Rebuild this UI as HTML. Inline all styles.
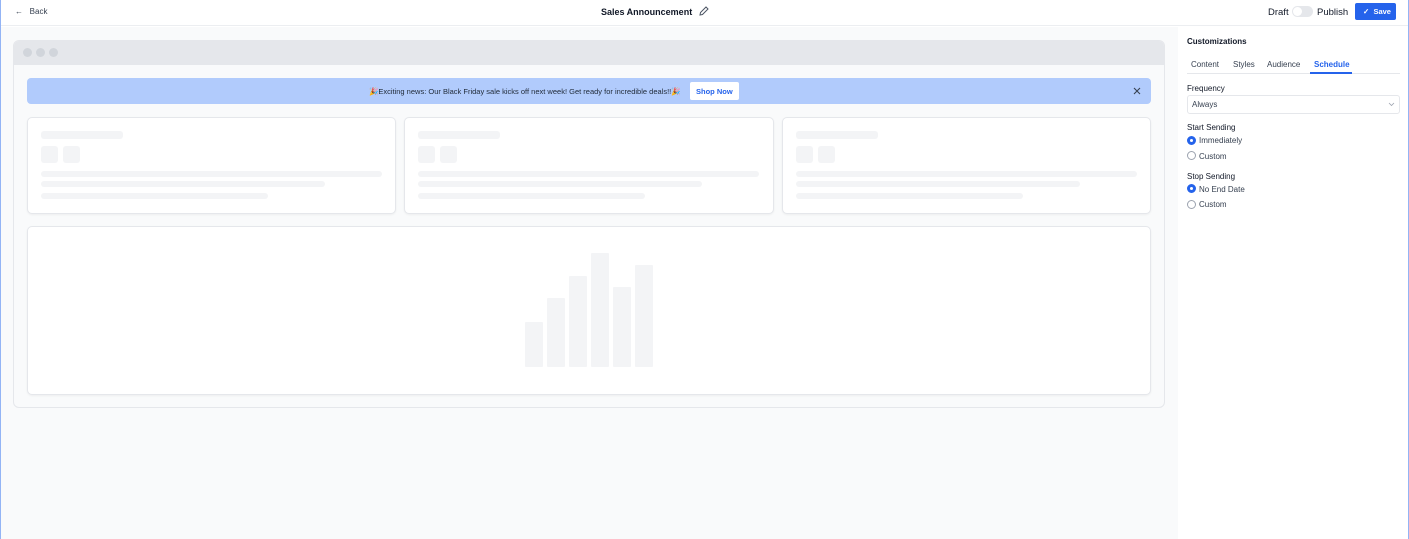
<!DOCTYPE html>
<html><head><style>
*{margin:0;padding:0;box-sizing:border-box}
body{width:1409px;height:539px;overflow:hidden;font-family:"Liberation Sans",sans-serif;background:#fff;position:relative;color:#111827}
.a{position:absolute}
.sk{position:absolute;background:#f3f4f6;border-radius:3px}
.card{position:absolute;background:#fff;border:1px solid #e5e7eb;border-radius:5px;box-shadow:0 1px 2px rgba(0,0,0,.05)}
.radio{position:absolute;width:9px;height:9px;border-radius:50%;border:1px solid #9ca3af;background:#fff}
.radio.on{border:3px solid #2563eb}
.t{position:absolute;font-size:8px;white-space:nowrap}
</style></head><body>
<div class="a" style="left:0;top:0;width:1px;height:539px;background:#93b4f5"></div>
<div class="a" style="right:0;top:0;width:1px;height:539px;background:#93b4f5"></div>
<div class="a" style="left:1px;top:0;width:1407px;height:26px;border-bottom:1px solid #eceef1;background:#fff"></div>
<div class="t" style="left:15px;top:7px;font-size:8px;color:#374151">←&nbsp;&nbsp;&nbsp;Back</div>
<div class="t" style="left:601px;top:7px;font-size:9px;font-weight:bold;color:#111827">Sales Announcement</div>
<svg class="a" style="left:698px;top:5px" width="12" height="12" viewBox="0 0 12 12"><path d="M2 10l.5-2.5L8 2l2 2-5.5 5.5z" fill="none" stroke="#4b5563" stroke-width="1"/></svg>
<div class="t" style="left:1268px;top:7px;font-size:9.5px;color:#111827">Draft</div>
<div class="a" style="left:1292px;top:6px;width:21px;height:11px;border-radius:6px;background:#e5e7eb"><div class="a" style="left:1px;top:1px;width:9px;height:9px;border-radius:50%;background:#fff"></div></div>
<div class="t" style="left:1317px;top:7px;font-size:9.5px;color:#111827">Publish</div>
<div class="a" style="left:1355px;top:3px;width:41px;height:17px;background:#2563eb;border-radius:2px;color:#fff;font-size:7.5px;font-weight:bold;padding:4px 0 0 8px">✓&nbsp;&nbsp;Save</div>
<div class="a" style="left:1px;top:27px;width:1177px;height:512px;background:#f9fafb"></div>
<div class="a" style="left:13px;top:40px;width:1152px;height:368px;border:1px solid #e5e7eb;border-radius:6px;background:#f9fafb;overflow:hidden">
<div class="a" style="left:0;top:0;width:1152px;height:24px;background:#e5e7eb"></div>
<div class="a" style="left:9px;top:7px;width:9px;height:9px;border-radius:50%;background:#d1d5db"></div>
<div class="a" style="left:22px;top:7px;width:9px;height:9px;border-radius:50%;background:#d1d5db"></div>
<div class="a" style="left:35px;top:7px;width:9px;height:9px;border-radius:50%;background:#d1d5db"></div>
</div>
<div class="a" style="left:27px;top:78px;width:1124px;height:26px;background:#b1cbfc;border-radius:4px"></div>
<div class="t" style="left:369px;top:87px;font-size:7.5px;color:#1f2937">🎉Exciting news: Our Black Friday sale kicks off next week! Get ready for incredible deals!!🎉</div>
<div class="a" style="left:690px;top:82px;width:49px;height:18px;background:#fff;border-radius:2px;font-size:7.5px;font-weight:bold;color:#2563eb;padding:5px 0 0 6px">Shop Now</div>
<svg class="a" style="left:1133px;top:87px" width="8" height="8" viewBox="0 0 8 8"><path d="M1 1l6 6M7 1l-6 6" stroke="#374151" stroke-width="1.1"/></svg>
<div class="card" style="left:27px;top:117px;width:369px;height:97px"></div>
<div class="card" style="left:404px;top:117px;width:370px;height:97px"></div>
<div class="card" style="left:782px;top:117px;width:369px;height:97px"></div>
<div class="sk" style="left:41px;top:131px;width:82px;height:8px"></div><div class="sk" style="left:41px;top:146px;width:17px;height:17px"></div><div class="sk" style="left:63px;top:146px;width:17px;height:17px"></div><div class="sk" style="left:41px;top:171px;width:341px;height:6px"></div><div class="sk" style="left:41px;top:181px;width:284px;height:6px"></div><div class="sk" style="left:41px;top:193px;width:227px;height:6px"></div>
<div class="sk" style="left:418px;top:131px;width:82px;height:8px"></div><div class="sk" style="left:418px;top:146px;width:17px;height:17px"></div><div class="sk" style="left:440px;top:146px;width:17px;height:17px"></div><div class="sk" style="left:418px;top:171px;width:341px;height:6px"></div><div class="sk" style="left:418px;top:181px;width:284px;height:6px"></div><div class="sk" style="left:418px;top:193px;width:227px;height:6px"></div>
<div class="sk" style="left:796px;top:131px;width:82px;height:8px"></div><div class="sk" style="left:796px;top:146px;width:17px;height:17px"></div><div class="sk" style="left:818px;top:146px;width:17px;height:17px"></div><div class="sk" style="left:796px;top:171px;width:341px;height:6px"></div><div class="sk" style="left:796px;top:181px;width:284px;height:6px"></div><div class="sk" style="left:796px;top:193px;width:227px;height:6px"></div>
<div class="card" style="left:27px;top:226px;width:1124px;height:169px"></div>
<div class="sk" style="left:525px;top:322px;width:18px;height:45px;border-radius:1px"></div>
<div class="sk" style="left:547px;top:298px;width:18px;height:69px;border-radius:1px"></div>
<div class="sk" style="left:569px;top:276px;width:18px;height:91px;border-radius:1px"></div>
<div class="sk" style="left:591px;top:253px;width:18px;height:114px;border-radius:1px"></div>
<div class="sk" style="left:613px;top:287px;width:18px;height:80px;border-radius:1px"></div>
<div class="sk" style="left:635px;top:265px;width:18px;height:102px;border-radius:1px"></div>
<div class="t" style="left:1187px;top:37px;font-weight:bold;color:#111827">Customizations</div>
<div class="t" style="left:1191px;top:60px;color:#374151">Content</div>
<div class="t" style="left:1233px;top:60px;color:#374151">Styles</div>
<div class="t" style="left:1267px;top:60px;color:#374151">Audience</div>
<div class="t" style="left:1314px;top:60px;color:#2563eb;font-weight:bold">Schedule</div>
<div class="a" style="left:1187px;top:73px;width:213px;height:1px;background:#e5e7eb"></div>
<div class="a" style="left:1310px;top:72px;width:42px;height:2px;background:#2563eb"></div>
<div class="t" style="left:1187px;top:84px">Frequency</div>
<div class="a" style="left:1187px;top:95px;width:213px;height:19px;border:1px solid #e5e7eb;border-radius:3px;background:#fff"></div>
<div class="t" style="left:1192px;top:100px;color:#374151">Always</div>
<svg class="a" style="left:1388px;top:102px" width="7" height="5" viewBox="0 0 7 5"><path d="M1 1l2.5 2.5L6 1" fill="none" stroke="#9ca3af" stroke-width="0.8"/></svg>
<div class="t" style="left:1187px;top:123px">Start Sending</div>
<div class="radio on" style="left:1187px;top:136px"></div><div class="t" style="left:1199px;top:136px;color:#374151">Immediately</div>
<div class="radio" style="left:1187px;top:151px"></div><div class="t" style="left:1199px;top:152px;color:#374151">Custom</div>
<div class="t" style="left:1187px;top:172px">Stop Sending</div>
<div class="radio on" style="left:1187px;top:184px"></div><div class="t" style="left:1199px;top:185px;color:#374151">No End Date</div>
<div class="radio" style="left:1187px;top:200px"></div><div class="t" style="left:1199px;top:200px;color:#374151">Custom</div>
</body></html>
